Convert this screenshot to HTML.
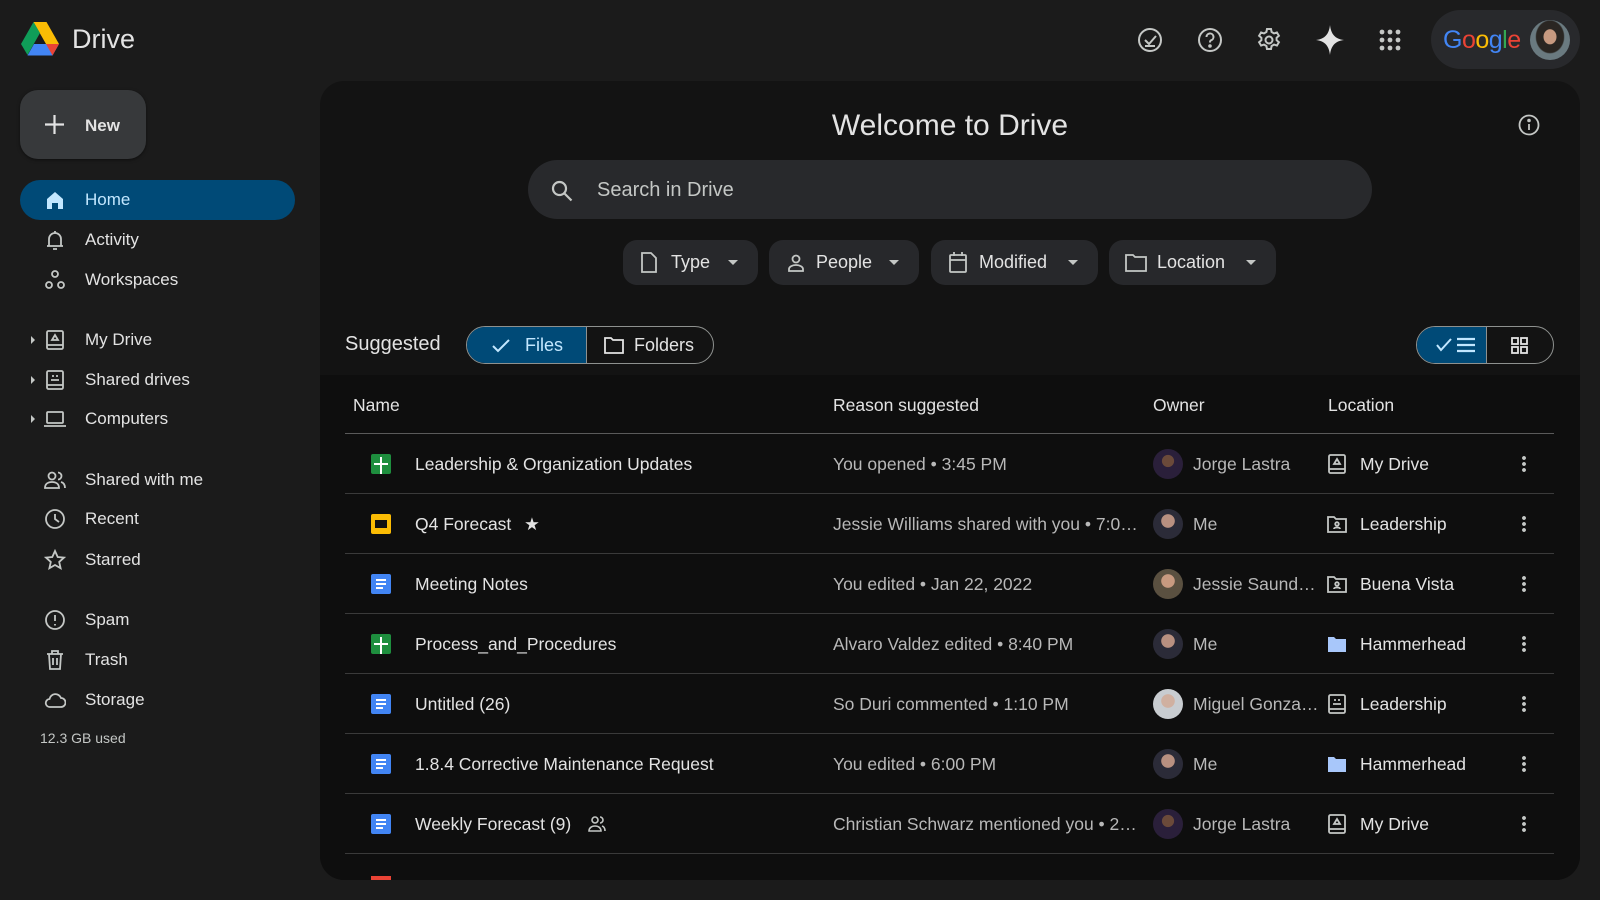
<!DOCTYPE html>
<html><head><meta charset="utf-8"><style>
*{box-sizing:border-box;margin:0;padding:0}
body{width:1600px;height:900px;background:#1b1b1b;font-family:"Liberation Sans",Arial,sans-serif;color:#e3e3e3;position:relative;overflow:hidden}
.abs{position:absolute}
svg{display:block}
.nav{position:absolute;left:20px;width:275px;height:40px;display:flex;align-items:center;font-size:17px;color:#e3e3e3}
.nav .ic{position:absolute;left:24px;top:9px;width:22px;height:22px}
.nav .tx{position:absolute;left:65px}
.nav .ar{position:absolute;left:11px;top:16px;width:0;height:0;border-top:4px solid transparent;border-bottom:4px solid transparent;border-left:4px solid #c4c7c5}
.chip{position:absolute;top:240px;height:45px;border-radius:14px;background:#27282b;display:flex;align-items:center;font-size:18px;color:#e3e3e3}
.chip .dd{position:absolute;right:20px;top:20px;border-left:5px solid transparent;border-right:5px solid transparent;border-top:5px solid #c4c7c5}
.row{position:absolute;left:345px;width:1209px;height:60px;border-bottom:1px solid #3a3a3a;font-size:17.5px}
.row>*{position:absolute}
.row .fi{left:26px;top:20px;width:20px;height:20px}
.row .nm{left:70px;top:20px;color:#e3e3e3}
.row .rs{left:488px;top:20px;color:#b8b8b8;width:305px;white-space:nowrap;overflow:hidden}
.row .av{left:808px;top:15px;width:30px;height:30px;border-radius:50%;background:radial-gradient(circle at 50% 40%,#b89080 0 28%,#2b2b38 30%)}
.row .ow{left:848px;top:20px;color:#b8b8b8}
.row .li{left:982px;top:20px;width:20px;height:20px}
.row .lt{left:1015px;top:20px;color:#e3e3e3}
.row .mo{left:1177px;top:21px;width:4px;height:18px;background:radial-gradient(circle,#c4c7c5 1.8px,transparent 2px) 0 0/4px 6px}
</style></head><body>

<svg width="0" height="0" style="position:absolute"><defs>
<symbol id="sh" viewBox="0 0 20 20"><rect x="0" y="0" width="20" height="20" rx="2" fill="#1e8e3e"/><path d="M10 3v17M3 10h14" stroke="#fff" stroke-width="2"/></symbol>
<symbol id="dc" viewBox="0 0 20 20"><rect x="0" y="0" width="20" height="20" rx="2" fill="#4285f4"/><path d="M5 6h10M5 10h10M5 14h7" stroke="#fff" stroke-width="2"/></symbol>
<symbol id="sl" viewBox="0 0 20 20"><rect x="0" y="0" width="20" height="20" rx="2" fill="#fbbc04"/><rect x="4" y="6" width="12" height="8" fill="#111"/></symbol>
</defs></svg>

<!-- logo -->
<svg class="abs" style="left:21px;top:22px" width="38" height="34" viewBox="0 0 38 34">
<path d="M12.5 0h13L38 22H25z" fill="#fbbc04"/>
<path d="M12.5 0L0 22l6.5 11L19 11z" fill="#0f9d58"/>
<path d="M13 22h25l-6.5 11.5H6.5z" fill="#4285f4"/>
<path d="M25 22h13l-6.5 11.5z" fill="#ea4335"/>
</svg>
<div class="abs" style="left:72px;top:24px;font-size:27px;color:#e3e3e3">Drive</div>

<!-- top icons -->
<svg class="abs" style="left:1137px;top:27px" width="26" height="26" viewBox="0 0 26 26" fill="none" stroke="#c4c7c5" stroke-width="2"><circle cx="13" cy="13" r="11"/><path d="M8 13l4 4 7-8M8 19h10"/></svg>
<svg class="abs" style="left:1197px;top:27px" width="26" height="26" viewBox="0 0 26 26" fill="none" stroke="#c4c7c5" stroke-width="2"><circle cx="13" cy="13" r="11"/><path d="M9.5 10a3.5 3.5 0 1 1 4.5 3.3c-1 .4-1 1-1 2.2"/><circle cx="13" cy="19" r=".8" fill="#c4c7c5"/></svg>
<svg class="abs" style="left:1256px;top:27px" width="26" height="26" viewBox="0 0 26 26" fill="none" stroke="#c4c7c5" stroke-width="2"><path d="M11 2h4l.6 3 2.4 1.4 2.9-1 2 3.4-2.3 2v2.4l2.3 2-2 3.4-2.9-1-2.4 1.4-.6 3h-4l-.6-3-2.4-1.4-2.9 1-2-3.4 2.3-2v-2.4l-2.3-2 2-3.4 2.9 1L10.4 5z"/><circle cx="13" cy="13" r="3.5"/></svg>
<svg class="abs" style="left:1316px;top:25px" width="28" height="30" viewBox="0 0 28 30"><path d="M14 0C15 9 19 14 28 15 19 16 15 21 14 30 13 21 9 16 0 15 9 14 13 9 14 0z" fill="#e3e3e3"/></svg>
<svg class="abs" style="left:1379px;top:29px" width="22" height="22" viewBox="0 0 22 22" fill="#c4c7c5"><circle cx="3" cy="3" r="2.4"/><circle cx="11" cy="3" r="2.4"/><circle cx="19" cy="3" r="2.4"/><circle cx="3" cy="11" r="2.4"/><circle cx="11" cy="11" r="2.4"/><circle cx="19" cy="11" r="2.4"/><circle cx="3" cy="19" r="2.4"/><circle cx="11" cy="19" r="2.4"/><circle cx="19" cy="19" r="2.4"/></svg>
<div class="abs" style="left:1431px;top:10px;width:149px;height:59px;border-radius:30px;background:#28292c"></div>
<div class="abs" style="left:1443px;top:26px;font-size:25px;letter-spacing:-0.5px"><span style="color:#4285f4">G</span><span style="color:#ea4335">o</span><span style="color:#fbbc04">o</span><span style="color:#4285f4">g</span><span style="color:#34a853">l</span><span style="color:#ea4335">e</span></div>
<div class="abs" style="left:1530px;top:20px;width:40px;height:40px;border-radius:50%;background:radial-gradient(ellipse at 50% 42%,#c89a80 0 22%,#2a2622 24% 48%,#6a7a80 52%)"></div>

<!-- New -->
<div class="abs" style="left:20px;top:90px;width:126px;height:69px;border-radius:18px;background:#37393b;box-shadow:0 1px 3px rgba(0,0,0,.5)"></div>
<svg class="abs" style="left:44px;top:114px" width="21" height="21" viewBox="0 0 21 21" stroke="#e3e3e3" stroke-width="2.2"><path d="M10.5 1v19M1 10.5h19"/></svg>
<div class="abs" style="left:85px;top:116px;font-size:17px;font-weight:bold;color:#e3e3e3">New</div>

<!-- Nav -->
<div class="nav" style="top:180px;background:#004a77;border-radius:20px;color:#c2e7ff"><svg class="ic" viewBox="0 0 22 22"><path d="M3 10L11 3l8 7v10h-5v-6H8v6H3z" fill="#c2e7ff"/></svg><span class="tx">Home</span></div>
<div class="nav" style="top:220px"><svg class="ic" viewBox="0 0 22 22" fill="none" stroke="#c4c7c5" stroke-width="1.8"><path d="M5 17V10a6 6 0 0 1 12 0v7M3 17h16M9 20h4M11 2v2"/></svg><span class="tx">Activity</span></div>
<div class="nav" style="top:260px"><svg class="ic" viewBox="0 0 22 22" fill="none" stroke="#c4c7c5" stroke-width="1.8"><circle cx="11" cy="5" r="3"/><circle cx="5" cy="16" r="3"/><circle cx="17" cy="16" r="3"/></svg><span class="tx">Workspaces</span></div>
<div class="nav" style="top:320px"><i class="ar"></i><svg class="ic" viewBox="0 0 22 22" fill="none" stroke="#c4c7c5" stroke-width="1.8"><rect x="3" y="2" width="16" height="18" rx="1.5"/><path d="M3 16h16M11 6l-3 5h6z"/></svg><span class="tx">My Drive</span></div>
<div class="nav" style="top:360px"><i class="ar"></i><svg class="ic" viewBox="0 0 22 22" fill="none" stroke="#c4c7c5" stroke-width="1.8"><rect x="3" y="2" width="16" height="18" rx="1.5"/><path d="M3 16h16M7 11h8M8 7h2M12 7h2"/></svg><span class="tx">Shared drives</span></div>
<div class="nav" style="top:399px"><i class="ar"></i><svg class="ic" viewBox="0 0 22 22" fill="none" stroke="#c4c7c5" stroke-width="1.8"><rect x="3" y="4" width="16" height="11" rx="1"/><path d="M0 18h22"/></svg><span class="tx">Computers</span></div>
<div class="nav" style="top:460px"><svg class="ic" viewBox="0 0 22 22" fill="none" stroke="#c4c7c5" stroke-width="1.8"><circle cx="8" cy="7" r="3.5"/><path d="M1 19c0-4 3-6 7-6s7 2 7 6zM14 3.5a3.5 3.5 0 0 1 0 7M17 13c2.5.7 4 2.6 4 6"/></svg><span class="tx">Shared with me</span></div>
<div class="nav" style="top:499px"><svg class="ic" viewBox="0 0 22 22" fill="none" stroke="#c4c7c5" stroke-width="1.8"><circle cx="11" cy="11" r="9"/><path d="M11 6v5l4 3"/></svg><span class="tx">Recent</span></div>
<div class="nav" style="top:540px"><svg class="ic" viewBox="0 0 22 22" fill="none" stroke="#c4c7c5" stroke-width="1.8"><path d="M11 2l2.7 6 6.3.6-4.8 4.3 1.4 6.3L11 16l-5.6 3.2 1.4-6.3L2 8.6 8.3 8z"/></svg><span class="tx">Starred</span></div>
<div class="nav" style="top:600px"><svg class="ic" viewBox="0 0 22 22" fill="none" stroke="#c4c7c5" stroke-width="1.8"><circle cx="11" cy="11" r="9"/><path d="M11 6v6M11 15v1.5"/></svg><span class="tx">Spam</span></div>
<div class="nav" style="top:640px"><svg class="ic" viewBox="0 0 22 22" fill="none" stroke="#c4c7c5" stroke-width="1.8"><path d="M3 5h16M8 5V2h6v3M5 5l1 15h10l1-15M9 9v7M13 9v7"/></svg><span class="tx">Trash</span></div>
<div class="nav" style="top:680px"><svg class="ic" viewBox="0 0 22 22" fill="none" stroke="#c4c7c5" stroke-width="1.8"><path d="M6 18a4 4 0 0 1-.5-8A6 6 0 0 1 17 9a4.5 4.5 0 0 1 0 9z"/></svg><span class="tx">Storage</span></div>
<div class="abs" style="left:40px;top:730px;font-size:14px;color:#c4c7c5">12.3 GB used</div>

<!-- Main panel -->
<div class="abs" style="left:320px;top:81px;width:1260px;height:799px;border-radius:24px;background:#131313;overflow:hidden">
  <div class="abs" style="left:0;top:294px;width:1260px;height:510px;background:#0e0e0e"></div>
</div>
<div class="abs" style="left:0;top:109px;width:1900px;text-align:center;font-size:30px;color:#e3e3e3">Welcome to Drive</div>
<svg class="abs" style="left:1518px;top:114px" width="22" height="22" viewBox="0 0 22 22" fill="none" stroke="#c4c7c5" stroke-width="1.8"><circle cx="11" cy="11" r="9.5"/><path d="M11 10v6"/><circle cx="11" cy="6.5" r=".9" fill="#c4c7c5"/></svg>

<div class="abs" style="left:528px;top:160px;width:844px;height:59px;border-radius:30px;background:#28292c"></div>
<svg class="abs" style="left:550px;top:179px" width="24" height="24" viewBox="0 0 24 24" fill="none" stroke="#c4c7c5" stroke-width="2.2"><circle cx="9.5" cy="9.5" r="6.5"/><path d="M14.5 14.5l7 7"/></svg>
<div class="abs" style="left:597px;top:179px;font-size:20px;color:#c4c7c5">Search in Drive</div>

<div class="chip" style="left:623px;width:135px"><svg class="abs" style="left:17px;top:12px" width="18" height="21" viewBox="0 0 18 21" fill="none" stroke="#c4c7c5" stroke-width="1.8"><path d="M2 1h9l5 5v14H2z"/></svg><span class="abs" style="left:48px;top:12px">Type</span><i class="dd"></i></div>
<div class="chip" style="left:769px;width:150px"><svg class="abs" style="left:17px;top:13px" width="20" height="20" viewBox="0 0 20 20" fill="none" stroke="#c4c7c5" stroke-width="1.8"><circle cx="10" cy="6" r="3.5"/><path d="M3 18v-2c0-2 3-4 7-4s7 2 7 4v2z"/></svg><span class="abs" style="left:47px;top:12px">People</span><i class="dd"></i></div>
<div class="chip" style="left:931px;width:167px"><svg class="abs" style="left:17px;top:12px" width="20" height="21" viewBox="0 0 20 21" fill="none" stroke="#c4c7c5" stroke-width="1.8"><rect x="2" y="3" width="16" height="17" rx="1"/><path d="M2 8h16M6 0v4M14 0v4"/></svg><span class="abs" style="left:48px;top:12px">Modified</span><i class="dd"></i></div>
<div class="chip" style="left:1109px;width:167px"><svg class="abs" style="left:16px;top:14px" width="22" height="18" viewBox="0 0 22 18" fill="none" stroke="#c4c7c5" stroke-width="1.8"><path d="M1 1h7l2 2h11v14H1z"/></svg><span class="abs" style="left:48px;top:12px">Location</span><i class="dd"></i></div>

<div class="abs" style="left:345px;top:333px;font-size:20px;color:#e3e3e3">Suggested</div>
<div class="abs" style="left:466px;top:326px;width:248px;height:38px;border:1px solid #8e918f;border-radius:19px;overflow:hidden">
  <div class="abs" style="left:0;top:0;width:120px;height:38px;background:#004a77;border-right:1px solid #8e918f"></div>
  <svg class="abs" style="left:25px;top:12px" width="18" height="14" viewBox="0 0 18 14" fill="none" stroke="#c2e7ff" stroke-width="2"><path d="M1 7l5 5L17 1"/></svg>
  <span class="abs" style="left:58px;top:8px;font-size:18px;color:#c2e7ff">Files</span>
  <svg class="abs" style="left:137px;top:10px" width="20" height="17" viewBox="0 0 20 17" fill="none" stroke="#e3e3e3" stroke-width="1.8"><path d="M1 1h6l2 2h10v13H1z"/></svg>
  <span class="abs" style="left:167px;top:8px;font-size:18px;color:#e3e3e3">Folders</span>
</div>
<div class="abs" style="left:1416px;top:326px;width:138px;height:38px;border:1px solid #8e918f;border-radius:19px;overflow:hidden">
  <div class="abs" style="left:0;top:0;width:70px;height:38px;background:#004a77;border-right:1px solid #8e918f"></div>
  <svg class="abs" style="left:19px;top:11px" width="16" height="14" viewBox="0 0 16 14" fill="none" stroke="#c2e7ff" stroke-width="2"><path d="M1 7l4 5L15 1"/></svg>
  <svg class="abs" style="left:40px;top:10px" width="18" height="16" viewBox="0 0 18 16" stroke="#c2e7ff" stroke-width="2.2"><path d="M0 2h18M0 8h18M0 14h18"/></svg>
  <svg class="abs" style="left:94px;top:10px" width="17" height="17" viewBox="0 0 17 17" fill="none" stroke="#e3e3e3" stroke-width="1.8"><rect x="1" y="1" width="6" height="6"/><rect x="10" y="1" width="6" height="6"/><rect x="1" y="10" width="6" height="6"/><rect x="10" y="10" width="6" height="6"/></svg>
</div>

<!-- header -->
<div class="abs" style="left:345px;top:394px;width:1209px;height:40px;border-bottom:1px solid #5a5a5a;font-size:17.5px;color:#e3e3e3">
  <span class="abs" style="left:8px;top:1px">Name</span>
  <span class="abs" style="left:488px;top:1px">Reason suggested</span>
  <span class="abs" style="left:808px;top:1px">Owner</span>
  <span class="abs" style="left:983px;top:1px">Location</span>
</div>

<!-- rows -->
<div class="row" style="top:434px"><svg class="fi"><use href="#sh"/></svg><span class="nm">Leadership &amp; Organization Updates</span><span class="rs">You opened • 3:45 PM</span><i class="av" style="background:radial-gradient(circle at 50% 40%,#6b4a3a 0 25%,#2a1f3a 27%)"></i><span class="ow">Jorge Lastra</span><svg class="li" viewBox="0 0 20 20" fill="none" stroke="#c4c7c5" stroke-width="1.8"><rect x="2" y="1" width="16" height="18" rx="1.5"/><path d="M2 15h16M10 5l-3 5h6z"/></svg><span class="lt">My Drive</span><i class="mo"></i></div>
<div class="row" style="top:494px"><svg class="fi"><use href="#sl"/></svg><span class="nm">Q4 Forecast <span style="margin-left:8px">★</span></span><span class="rs">Jessie Williams shared with you • 7:0…</span><i class="av"></i><span class="ow">Me</span><svg class="li" viewBox="0 0 20 20" fill="none" stroke="#c4c7c5" stroke-width="1.8"><path d="M1 3h6l2 2h10v13H1z"/><circle cx="10" cy="10" r="1.8"/><path d="M7 15c0-2 6-2 6 0"/></svg><span class="lt">Leadership</span><i class="mo"></i></div>
<div class="row" style="top:554px"><svg class="fi"><use href="#dc"/></svg><span class="nm">Meeting Notes</span><span class="rs">You edited • Jan 22, 2022</span><i class="av" style="background:radial-gradient(circle at 50% 40%,#c89a80 0 28%,#5a5040 30%)"></i><span class="ow">Jessie Saund…</span><svg class="li" viewBox="0 0 20 20" fill="none" stroke="#c4c7c5" stroke-width="1.8"><path d="M1 3h6l2 2h10v13H1z"/><circle cx="10" cy="10" r="1.8"/><path d="M7 15c0-2 6-2 6 0"/></svg><span class="lt">Buena Vista</span><i class="mo"></i></div>
<div class="row" style="top:614px"><svg class="fi"><use href="#sh"/></svg><span class="nm">Process_and_Procedures</span><span class="rs">Alvaro Valdez edited • 8:40 PM</span><i class="av"></i><span class="ow">Me</span><svg class="li" viewBox="0 0 20 20"><path d="M1 3h6l2 2h10v13H1z" fill="#a8c7fa"/></svg><span class="lt">Hammerhead</span><i class="mo"></i></div>
<div class="row" style="top:674px"><svg class="fi"><use href="#dc"/></svg><span class="nm">Untitled (26)</span><span class="rs">So Duri commented • 1:10 PM</span><i class="av" style="background:radial-gradient(circle at 50% 40%,#d0b0a0 0 28%,#c8ccd0 30%)"></i><span class="ow">Miguel Gonza…</span><svg class="li" viewBox="0 0 20 20" fill="none" stroke="#c4c7c5" stroke-width="1.8"><rect x="2" y="1" width="16" height="18" rx="1.5"/><path d="M2 15h16M6 10h8M7 6h2M11 6h2"/></svg><span class="lt">Leadership</span><i class="mo"></i></div>
<div class="row" style="top:734px"><svg class="fi"><use href="#dc"/></svg><span class="nm">1.8.4 Corrective Maintenance Request</span><span class="rs">You edited • 6:00 PM</span><i class="av"></i><span class="ow">Me</span><svg class="li" viewBox="0 0 20 20"><path d="M1 3h6l2 2h10v13H1z" fill="#a8c7fa"/></svg><span class="lt">Hammerhead</span><i class="mo"></i></div>
<div class="row" style="top:794px"><svg class="fi"><use href="#dc"/></svg><span class="nm">Weekly Forecast (9)</span><svg class="abs" style="left:243px;top:21px" width="18" height="17" viewBox="0 0 18 17" fill="none" stroke="#c4c7c5" stroke-width="1.6"><circle cx="7" cy="5" r="3"/><path d="M1 16c0-3 2.5-5 6-5s6 2 6 5zM12 2a3 3 0 0 1 0 6M14 11c2 .6 3 2.5 3 5"/></svg><span class="rs">Christian Schwarz mentioned you • 2…</span><i class="av" style="background:radial-gradient(circle at 50% 40%,#6b4a3a 0 25%,#2a1f3a 27%)"></i><span class="ow">Jorge Lastra</span><svg class="li" viewBox="0 0 20 20" fill="none" stroke="#c4c7c5" stroke-width="1.8"><rect x="2" y="1" width="16" height="18" rx="1.5"/><path d="M2 15h16M10 5l-3 5h6z"/></svg><span class="lt">My Drive</span><i class="mo"></i></div>
<div class="abs" style="left:371px;top:876px;width:20px;height:4px;background:#ea4335"></div>
<div class="abs" style="left:0;top:880px;width:1600px;height:20px;background:#1b1b1b"></div>
</body></html>
